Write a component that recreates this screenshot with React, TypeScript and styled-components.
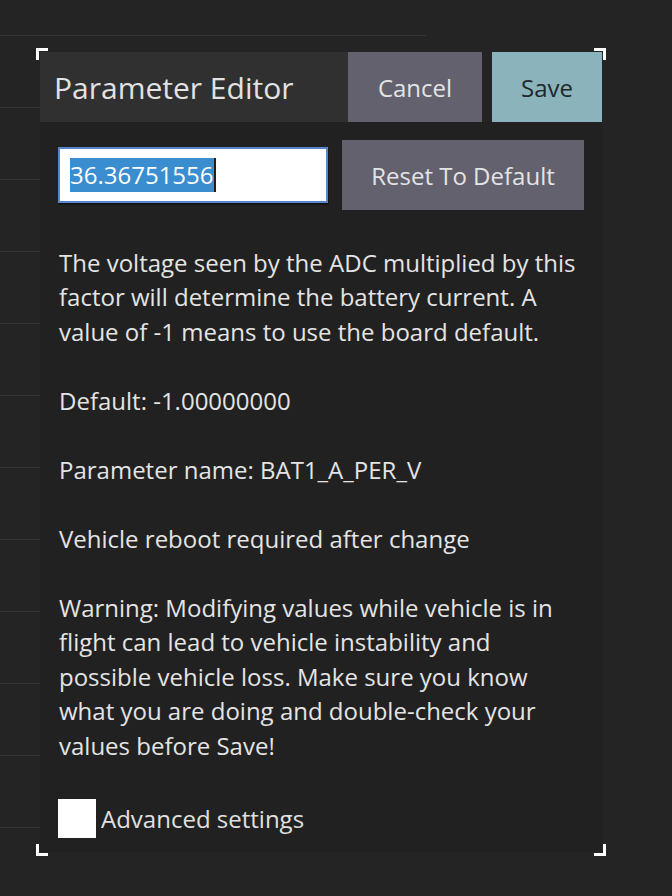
import React from "react";
import styled, { createGlobalStyle } from "styled-components";

const GlobalStyle = createGlobalStyle`
  html, body {
    margin: 0;
    padding: 0;
    background: #242424;
  }
  body {
    font-family: "Open Sans", "Noto Sans", "DejaVu Sans", sans-serif;
    color: #e4e4e4;
  }
`;

const Page = styled.div`
  position: relative;
  width: 672px;
  height: 896px;
  overflow: hidden;
  background: #242424;
`;

const ListBehind = styled.div`
  width: 426px;
  padding-top: 35px;
  display: flex;
  flex-direction: column;
`;

const ListRow = styled.div`
  height: 72px;
  box-sizing: border-box;
  border-top: 1px solid #363636;
`;

const Dialog = styled.div`
  position: absolute;
  top: 52px;
  left: 40px;
  width: 562px;
  display: flex;
  flex-direction: column;
`;

const Corner = styled.span<{ $v: "top" | "bottom"; $h: "left" | "right" }>`
  position: absolute;
  width: 12px;
  height: 12px;
  box-sizing: border-box;
  ${(p) => p.$v}: -4px;
  ${(p) => p.$h}: -4px;
  border-${(p) => p.$v}: 3px solid #ffffff;
  border-${(p) => p.$h}: 3px solid #ffffff;
`;

const Header = styled.div`
  display: flex;
  height: 70px;
  gap: 10px;
`;

const TitleArea = styled.div`
  flex: 1;
  display: flex;
  align-items: center;
  padding-left: 14px;
  margin-right: -10px;
  background: #303030;
  font-size: 30px;
  color: #e2e2e2;
  white-space: nowrap;
`;

const HeaderButton = styled.button<{ $primary?: boolean; $w: number }>`
  width: ${(p) => p.$w}px;
  height: 70px;
  border: none;
  margin: 0;
  padding: 0;
  font-family: inherit;
  font-size: 24px;
  background: ${(p) => (p.$primary ? "#8bb3bc" : "#63616e")};
  color: ${(p) => (p.$primary ? "#1d282c" : "#e4e4e4")};
  cursor: pointer;
`;

const Body = styled.div`
  background: #212121;
  padding: 18px 18px 14px 18px;
  display: flex;
  flex-direction: column;
`;

const EditRow = styled.div`
  display: flex;
  align-items: center;
  gap: 14px;
  height: 70px;
`;

const ValueField = styled.div`
  width: 270px;
  height: 56px;
  box-sizing: border-box;
  border: 2px solid #5586cc;
  background: #ffffff;
  display: flex;
  align-items: center;
  padding-left: 10px;
  box-shadow: 1px 2px 0 #151515;
  font-size: 24px;
  line-height: 34px;
`;

const Selected = styled.span`
  background: #3a8dce;
  color: #ffffff;
`;

const Caret = styled.span`
  display: inline-block;
  width: 2px;
  height: 34px;
  background: #202020;
`;

const ResetButton = styled.button`
  width: 242px;
  height: 70px;
  border: none;
  margin: 0;
  padding: 0;
  font-family: inherit;
  font-size: 24px;
  background: #63616e;
  color: #e4e4e4;
`;

const Description = styled.div`
  margin-top: 35.5px;
  padding-left: 1px;
  width: 522px;
  font-size: 24px;
  line-height: 34.5px;
  color: #e4e4e4;
`;

const Para = styled.p`
  margin: 0 0 34.5px 0;
  &:last-child {
    margin-bottom: 0;
  }
`;

const CheckRow = styled.label`
  margin-top: 36px;
  display: flex;
  align-items: center;
  gap: 5px;
  font-size: 24px;
  line-height: 34px;
  color: #e0e0e0;
`;

const CheckBox = styled.span`
  width: 38px;
  height: 39px;
  background: #ffffff;
  display: inline-block;
`;

const rows = Array.from({ length: 12 }, (_, i) => i);

export default function App() {
  return (
    <Page>
      <GlobalStyle />
      <ListBehind>
        {rows.map((r) => (
          <ListRow key={r} />
        ))}
      </ListBehind>
      <Dialog>
        <Corner $v="top" $h="left" />
        <Corner $v="top" $h="right" />
        <Corner $v="bottom" $h="left" />
        <Corner $v="bottom" $h="right" />
        <Header>
          <TitleArea>Parameter Editor</TitleArea>
          <HeaderButton $w={134}>Cancel</HeaderButton>
          <HeaderButton $w={110} $primary>
            Save
          </HeaderButton>
        </Header>
        <Body>
          <EditRow>
            <ValueField role="textbox">
              <Selected>36.36751556</Selected>
              <Caret />
            </ValueField>
            <ResetButton>Reset To Default</ResetButton>
          </EditRow>
          <Description>
            <Para>
              The voltage seen by the ADC multiplied by this factor will determine the battery
              current. A value of -1 means to use the board default.
            </Para>
            <Para>Default: -1.00000000</Para>
            <Para>Parameter name: BAT1_A_PER_V</Para>
            <Para>Vehicle reboot required after change</Para>
            <Para>
              Warning: Modifying values while vehicle is in flight can lead to vehicle instability
              and possible vehicle loss. Make sure you know what you are doing and double-check
              your values before Save!
            </Para>
          </Description>
          <CheckRow>
            <CheckBox />
            Advanced settings
          </CheckRow>
        </Body>
      </Dialog>
    </Page>
  );
}
